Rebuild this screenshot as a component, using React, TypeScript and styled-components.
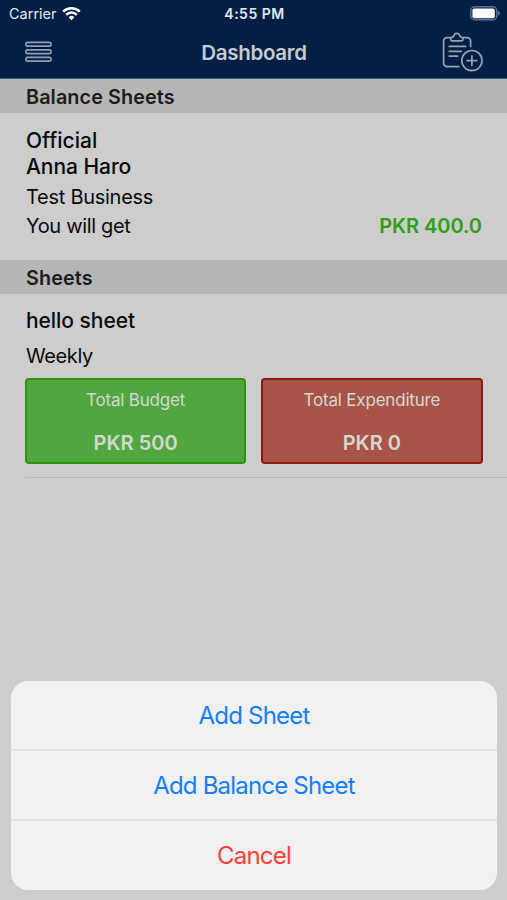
import React from "react";
import styled, { createGlobalStyle } from "styled-components";

const GlobalStyle = createGlobalStyle`
  * { box-sizing: border-box; }
  html, body { margin: 0; padding: 0; }
  body { font-family: Inter, "Liberation Sans", sans-serif; background: #cdcdcd; }
`;

const Screen = styled.div`
  position: relative;
  display: flex;
  flex-direction: column;
  width: 507px;
  height: 900px;
  overflow: hidden;
  background: #cdcdcd;
  color: #0a0a0a;
`;

const Header = styled.header`
  height: 79px;
  background: #041f45;
  border-bottom: 1px solid #3f5a78;
`;

const StatusBar = styled.div`
  display: grid;
  grid-template-columns: 1fr auto 1fr;
  align-items: center;
  height: 27px;
  padding: 0 7px 0 9px;
`;

const Carrier = styled.div`
  display: flex;
  align-items: center;
  gap: 5px;
  color: #e4e9f0;
`;

const BatterySlot = styled.div`
  display: flex;
  justify-content: flex-end;
`;

const NavBar = styled.div`
  display: grid;
  grid-template-columns: 1fr auto 1fr;
  align-items: center;
  height: 50px;
  padding: 0 24px 0 25px;
`;

const IconButton = styled.button<{ $end?: boolean }>`
  display: flex;
  justify-self: ${(p) => (p.$end ? "end" : "start")};
  padding: 0;
  border: 0;
  background: none;
`;

const Text = styled.span<{
  $size: number;
  $weight?: number;
  $spacing?: number;
  $color?: string;
}>`
  font-size: ${(p) => p.$size}px;
  font-weight: ${(p) => p.$weight ?? 400};
  letter-spacing: ${(p) => p.$spacing ?? 0}px;
  color: ${(p) => p.$color ?? "inherit"};
  white-space: nowrap;
`;

const SectionHeader = styled.h2`
  display: flex;
  align-items: center;
  height: 34px;
  margin: 0;
  padding: 2px 26px 0;
  background: #b6b6b6;
  color: #1c1c1c;
`;

const BalanceEntry = styled.section`
  height: 147px;
  padding: 14px 25px 0 26px;
`;

const Line = styled.div<{ $height: number }>`
  display: flex;
  flex-shrink: 0;
  align-items: center;
  justify-content: space-between;
  height: ${(p) => p.$height}px;
`;

const SheetEntry = styled.section`
  height: 184px;
  margin-left: 25px;
  padding: 10px 24.5px 0 0;
  border-bottom: 1px solid #b9b9b9;
`;

const SheetLabel = styled(Line)`
  padding-left: 1px;
`;

const Totals = styled.div`
  display: grid;
  grid-template-columns: 1fr 1fr;
  gap: 15px;
  margin-top: 2px;
`;

const TotalCard = styled.div<{ $fill: string; $edge: string }>`
  display: flex;
  flex-direction: column;
  align-items: center;
  height: 86px;
  padding-top: 8px;
  border: 2px solid ${(p) => p.$edge};
  border-radius: 4px;
  background: ${(p) => p.$fill};
  color: #d4d8d0;
`;

const ActionSheet = styled.div`
  position: absolute;
  left: 11px;
  right: 10px;
  bottom: 10px;
  display: flex;
  flex-direction: column;
  overflow: hidden;
  border-radius: 17px;
  background: #f0f1f0;
`;

const Action = styled.button`
  display: flex;
  align-items: center;
  justify-content: center;
  height: 70px;
  padding: 0;
  border: 0;
  background: none;
  font-family: inherit;

  &:not(:last-child) {
    border-bottom: 2px solid #e2e3e2;
  }
  &:last-child {
    height: 69px;
    padding-bottom: 1px;
  }
`;

const WifiIcon = () => (
  <svg width="19" height="15" viewBox="0 0 19 15" fill="none" stroke="#fff" strokeWidth="2.5">
    <path d="M1.2 5.7a11.8 11.8 0 0 1 16.6 0" />
    <path d="M4.2 8.8a7.5 7.5 0 0 1 10.6 0" />
    <path d="M9.5 14.3 6.6 11.3a4.1 4.1 0 0 1 5.8 0Z" fill="#fff" stroke="none" />
  </svg>
);

const BatteryIcon = () => (
  <svg width="30" height="15" viewBox="0 0 30 15">
    <rect x="0.8" y="0.8" width="26" height="13" rx="4" fill="none" stroke="#5f7190" strokeWidth="1.4" />
    <rect x="2.4" y="2.4" width="22.4" height="9.8" rx="2" fill="#fff" />
    <path d="M27.9 4.8c1.5.4 1.9 1.5 1.9 2.4s-.4 2-1.9 2.4Z" fill="#5f7190" />
  </svg>
);

const MenuIcon = () => (
  <svg width="27" height="22" viewBox="0 0 27 22" fill="none" stroke="#93a0b1" strokeWidth="1.6">
    <rect x="0.9" y="1.4" width="25.2" height="3.7" rx="1.85" />
    <rect x="0.9" y="8.9" width="25.2" height="3.7" rx="1.85" />
    <rect x="0.9" y="16.4" width="25.2" height="3.7" rx="1.85" />
  </svg>
);

const ClipboardAddIcon = () => (
  <svg
    width="41"
    height="40"
    viewBox="0 0 41 40"
    fill="none"
    stroke="#97a3b3"
    strokeWidth="1.7"
    strokeLinecap="round"
    strokeLinejoin="round"
  >
    <path d="M8.2 5.7H4.9a3.3 3.3 0 0 0-3.3 3.3v22.3a3.3 3.3 0 0 0 3.3 3.3H17" />
    <path d="M21.3 5.7h4a3.3 3.3 0 0 1 3.3 3.3v5.4" />
    <path d="M10.3 8.9c-2.2 0-2.3-3.1-.3-3.7 1.6-.4 1.8-1 2.2-2.1.8-2.4 4.5-2.4 5.3 0 .4 1.1.7 1.7 2.2 2.1 2 .6 1.9 3.7-.3 3.7Z" />
    <path d="M7.2 14.4h16.4M7.2 19.3h12M7.2 24.1h8.6" />
    <circle cx="29.9" cy="28.6" r="10.1" />
    <path d="M29.9 23.8v9.6M25.1 28.6h9.6" />
  </svg>
);

const totals = [
  { label: "Total Budget", value: "PKR 500", fill: "#52a640", edge: "#2b9711" },
  { label: "Total Expenditure", value: "PKR 0", fill: "#a95448", edge: "#93180c" },
];

const actions = [
  { label: "Add Sheet", color: "#157efb" },
  { label: "Add Balance Sheet", color: "#157efb" },
  { label: "Cancel", color: "#fb4137" },
];

export default function App() {
  return (
    <>
      <GlobalStyle />
      <Screen>
        <Header>
          <StatusBar>
            <Carrier>
              <Text $size={14.5}>Carrier</Text>
              <WifiIcon />
            </Carrier>
            <Text $size={14} $weight={600} $spacing={0.5} $color="#e4e9f0">4:55 PM</Text>
            <BatterySlot>
              <BatteryIcon />
            </BatterySlot>
          </StatusBar>
          <NavBar>
            <IconButton aria-label="Menu">
              <MenuIcon />
            </IconButton>
            <Text $size={20.5} $weight={600} $spacing={-0.3} $color="#c7cbd1">Dashboard</Text>
            <IconButton $end aria-label="New sheet">
              <ClipboardAddIcon />
            </IconButton>
          </NavBar>
        </Header>

        <SectionHeader>
          <Text $size={19.8} $weight={600} $spacing={0.1}>Balance Sheets</Text>
        </SectionHeader>
        <BalanceEntry>
          <Line $height={26}><Text $size={21} $weight={500}>Official</Text></Line>
          <Line $height={27}><Text $size={21} $weight={500} $spacing={-0.05}>Anna Haro</Text></Line>
          <Line $height={34}><Text $size={20} $spacing={-0.27}>Test Business</Text></Line>
          <Line $height={24}>
            <Text $size={20} $spacing={-0.33}>You will get</Text>
            <Text $size={20} $weight={600} $spacing={-0.05} $color="#2f9e18">PKR 400.0</Text>
          </Line>
        </BalanceEntry>

        <SectionHeader>
          <Text $size={19.8} $weight={600} $spacing={0.1}>Sheets</Text>
        </SectionHeader>
        <SheetEntry>
          <SheetLabel $height={32}><Text $size={21} $weight={500} $spacing={-0.05}>hello sheet</Text></SheetLabel>
          <SheetLabel $height={40}><Text $size={20} $spacing={-0.4}>Weekly</Text></SheetLabel>
          <Totals>
            {totals.map((t) => (
              <TotalCard key={t.label} $fill={t.fill} $edge={t.edge}>
                <Line $height={23}><Text $size={17} $spacing={-0.2}>{t.label}</Text></Line>
                <Line $height={64}><Text $size={20} $weight={600} $spacing={0.05}>{t.value}</Text></Line>
              </TotalCard>
            ))}
          </Totals>
        </SheetEntry>

        <ActionSheet role="dialog">
          {actions.map((a) => (
            <Action key={a.label}>
              <Text $size={24} $spacing={-0.8} $color={a.color}>{a.label}</Text>
            </Action>
          ))}
        </ActionSheet>
      </Screen>
    </>
  );
}
